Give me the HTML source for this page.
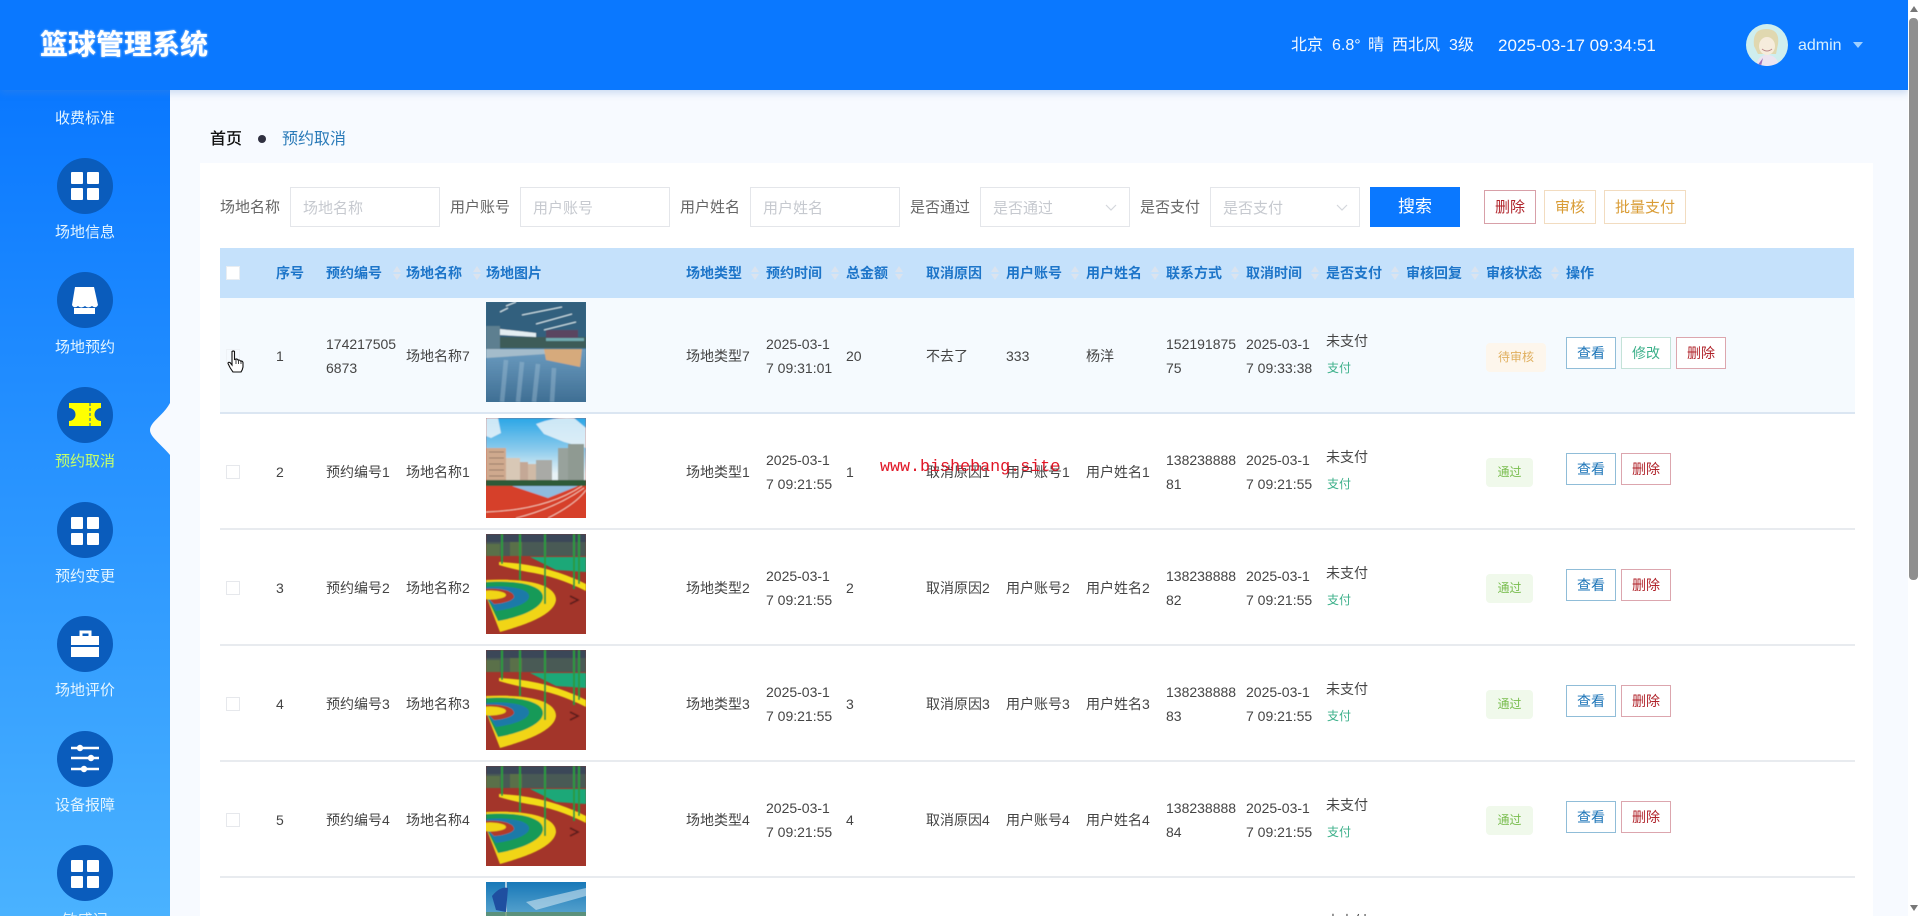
<!DOCTYPE html>
<html lang="zh"><head><meta charset="utf-8"><title>篮球管理系统</title>
<style>
*{box-sizing:border-box}
html,body{margin:0;padding:0;width:1920px;height:916px;overflow:hidden;background:#f7faff;font-family:"Liberation Sans","Noto Sans CJK SC",sans-serif}
#wrap{position:relative;width:1920px;height:916px;overflow:hidden;background:#f7faff}
.a{position:absolute;white-space:nowrap}
#hd{position:absolute;left:0;top:0;width:1908px;height:90px;background:#0a78ff;box-shadow:0 3px 7px rgba(90,140,210,.28);z-index:5}
#sb{position:absolute;left:0;top:90px;width:170px;height:826px;background:linear-gradient(180deg,#0a78ff,#4ab2ff)}
.lb{position:absolute;left:0;width:170px;text-align:center;color:#e4f5ff;font-size:15px;line-height:20px}
#panel{position:absolute;left:200px;top:163px;width:1673px;height:753px;background:#fff}
.fl{position:absolute;top:198px;font-size:15px;line-height:20px;color:#666}
.ip{position:absolute;top:187px;width:150px;height:40px;border:1px solid #e4e6ea;background:#fff;color:#c6c9cf;font-size:15px;line-height:41px;padding-left:12px}
.tb{position:absolute;top:190px;height:34px;background:#fff;font-size:15px;line-height:34px;text-align:center;border:1px solid #f2dcc0;color:#d99c35}
#th{position:absolute;left:220px;top:248px;width:1634px;height:51px;background:#c5e1fb}
.h{position:absolute;top:263px;font-size:14px;font-weight:700;line-height:20px;color:#1d75c9;white-space:nowrap}
.s{position:absolute;top:266px;width:8px;height:14px}
.s:before,.s:after{content:"";position:absolute;left:0;border-left:4px solid transparent;border-right:4px solid transparent}
.s:before{top:0;border-bottom:6px solid #dbe3ee}
.s:after{bottom:0;border-top:6px solid #dbe3ee}
.r{position:absolute;left:220px;width:1635px;height:116px;border-bottom:2px solid #e8ebef;background:#fff}
.r1{background:#f5fafe;border-bottom-color:#dbe6f2}
.t{position:absolute;top:46px;line-height:24px;font-size:14px;color:#444;white-space:nowrap}
.d{top:34px}
.ck{position:absolute;left:6px;top:51px;width:14px;height:14px;border:1px solid #e6e8ec;background:#fff}
.im{position:absolute;left:266px;top:4px;width:100px;height:100px;display:block}
.np{position:absolute;left:1106px;top:33px;font-size:14px;line-height:20px;color:#444}
.pay{position:absolute;left:1107px;top:61px;font-size:12px;line-height:18px;color:#3cb08a}
.tag{position:absolute;left:1266px;top:44px;height:29px;line-height:29px;font-size:12px;text-align:center;border-radius:4px}
.ok{width:47px;background:#f0f9eb;color:#79bd4e}
.wt{width:60px;top:45px;background:#fdf6ec;color:#e0b060}
.b{position:absolute;top:39px;width:50px;height:32px;line-height:30px;font-size:14px;text-align:center;background:#fff}
.v{left:1346px;border:1px solid #90bdd8;color:#1d75b8}
.m{left:1401px;border:1px solid #c4e2d8;color:#3cb08a}
.x{border:1px solid #dca6ae;color:#b0232a}
</style></head><body>
<div id="wrap">
<svg width="0" height="0" style="position:absolute"><defs>
<filter id="bl" x="-5%" y="-5%" width="110%" height="110%"><feGaussianBlur stdDeviation=".55"/></filter>
<linearGradient id="sky" x1="0" y1="0" x2="0" y2="1"><stop offset="0" stop-color="#2aa6e6"/><stop offset=".45" stop-color="#8ccbec"/><stop offset=".8" stop-color="#e8f2f6"/></linearGradient>
<linearGradient id="fl" x1="0" y1="0" x2="0" y2="1"><stop offset="0" stop-color="#6c9cc0"/><stop offset="1" stop-color="#3f6f94"/></linearGradient>
<linearGradient id="sk2" x1="0" y1="0" x2="0" y2="1"><stop offset="0" stop-color="#1878b8"/><stop offset="1" stop-color="#8cc6df"/></linearGradient>
<symbol id="gym" viewBox="0 0 100 100">
<rect width="100" height="100" fill="#3f7090"/>
<g filter="url(#bl)">
<rect width="100" height="38" fill="#32607e"/>
<path d="M20 4L30 0M36 13L76 5M50 22L86 12M58 28L90 20M14 10L22 6" stroke="#d6e8ee" stroke-width="1.1"/>
<rect x="0" y="24" width="14" height="24" fill="#5d7f90"/>
<path d="M14 27L50 31V35L14 33Z" fill="#e4eef2"/>
<rect x="14" y="35" width="86" height="11" fill="#3e5c58"/>
<rect x="60" y="28" width="32" height="8" fill="#5a4560"/>
<rect x="60" y="36" width="38" height="3" fill="#6faab0"/>
<rect y="47" width="100" height="53" fill="url(#fl)"/>
<path d="M0 47H60V52L0 56Z" fill="#a4bccb"/>
<path d="M58 47H96L94 65 60 58Z" fill="#d6aa7c"/>
<path d="M20 58L16 100M36 60L32 100M52 62L48 100M68 66L66 100" stroke="#a6c4d8" stroke-width="4.5" opacity=".4"/>
</g></symbol>
<symbol id="sch" viewBox="0 0 100 100">
<rect width="100" height="100" fill="#d6402a"/>
<g filter="url(#bl)">
<rect width="100" height="70" fill="url(#sky)"/>
<path d="M0 0H12L15 15 5 20 0 18ZM50 6Q70 -2 88 0L100 10V30L78 24 58 16Z" fill="#f4f8fa" opacity=".8"/>
<rect x="0" y="30" width="20" height="38" fill="#cfa98e"/>
<path d="M3 34H18M3 40H18M3 46H18M3 52H18M3 58H18" stroke="#9a7a68" stroke-width="1"/>
<rect x="20" y="40" width="14" height="27" fill="#d8c8b6"/>
<rect x="34" y="44" width="8" height="23" fill="#c4a896"/>
<rect x="42" y="46" width="8" height="21" fill="#d0baa6"/>
<rect x="50" y="42" width="16" height="24" fill="#a9aaa6"/>
<rect x="72" y="30" width="10" height="34" fill="#98a29c"/>
<rect x="82" y="26" width="16" height="38" fill="#8f9a92"/>
<rect x="0" y="62" width="100" height="7" fill="#2d5a38"/>
<rect y="68" width="100" height="32" fill="#d6402a"/>
<path d="M26 68L92 68 62 80Z" fill="#8fbbdd"/>
<path d="M0 94Q60 92 96 68M30 100Q70 90 98 70M62 100Q90 86 100 72" stroke="#f4c8b8" stroke-width=".9" fill="none"/>
</g></symbol>
<symbol id="rb" viewBox="0 0 100 100">
<rect width="100" height="100" fill="#a3352a"/>
<g filter="url(#bl)">
<rect width="100" height="22" fill="#4a5a54"/>
<path d="M0 0H100V8H0Z" fill="#3a4658"/>
<path d="M0 10H14V22H0ZM24 8H36V22H24Z" fill="#5a7048"/>
<path d="M44 23H100V38L70 36Z" fill="#1fa878"/>
<path d="M13 28Q60 30 100 50V57Q70 42 42 38 26 35 13 31Z" fill="#f2dc14"/>
<path d="M0 46C40 44 70 50 70 66C68 82 35 92 14 98L0 62Z" fill="#f1d512"/>
<path d="M0 48C35 46 58 52 57 64C55 76 30 84 12 87L0 62Z" fill="#159a58"/>
<path d="M0 53C25 51 44 55 43 63C42 70 25 75 10 77L0 62Z" fill="#1b7aa8"/>
<path d="M0 55C15 54 28 57 28 63C27 67 15 70 8 70L0 62Z" fill="#b03a2c"/>
<ellipse cx="4" cy="61" rx="16" ry="4.5" fill="#f1d512"/>
<path d="M59 0V70M88 0V55M93 0V50M34 0V46M16 0V30" stroke="#2a9a3c" stroke-width="2" fill="none"/>
<path d="M84 62L92 66 84 70" stroke="#5a1f1a" stroke-width="1.5" fill="none"/>
</g></symbol>
<symbol id="ct" viewBox="0 0 100 100">
<rect width="100" height="60" fill="url(#sk2)"/>
<path d="M40 20L100 6V14L50 28Z" fill="#cfe4f0" opacity=".6"/>
<path d="M20 0V34" stroke="#e8eef2" stroke-width="1.4"/>
<path d="M6 14Q14 4 22 6L20 30 10 28Z" fill="#1f4fa0"/>
<rect y="30" width="100" height="30" fill="#5e8a5a" opacity=".7"/>
</symbol>
</defs></svg>

<div id="sb"></div>
<svg class="a" style="left:0;top:90px" width="170" height="826" viewBox="0 90 170 826">
<path d="M170 403C165 412 158 417 153 423C149 428 149 432 153 437C158 443 165 449 170 455Z" fill="#f7faff"/>
<g fill="#0a5cbc"><circle cx="85" cy="186" r="28"/><circle cx="85" cy="300" r="28"/><circle cx="85" cy="415" r="28"/><circle cx="85" cy="530" r="28"/><circle cx="85" cy="644" r="28"/><circle cx="85" cy="759" r="28"/><circle cx="85" cy="873" r="28"/></g>
<g fill="#fff">
<rect x="71" y="172" width="12" height="12" rx="1"/><rect x="87" y="172" width="12" height="12" rx="1"/><rect x="71" y="188" width="12" height="12" rx="1"/><rect x="87" y="188" width="12" height="12" rx="1"/>
<path d="M75 287H94L98 305Q96 309 92 306Q88 309 85 306Q81 309 78 306Q74 309 72 305Z"/><path d="M74 308H95V314H74Z"/>
<rect x="71" y="517" width="12" height="12" rx="1"/><rect x="87" y="517" width="12" height="12" rx="1"/><rect x="71" y="533" width="12" height="12" rx="1"/><rect x="87" y="533" width="12" height="12" rx="1"/>
<rect x="71" y="860" width="12" height="12" rx="1"/><rect x="87" y="860" width="12" height="12" rx="1"/><rect x="71" y="876" width="12" height="12" rx="1"/><rect x="87" y="876" width="12" height="12" rx="1"/>
<path d="M71 636H99V645H71ZM71 647H99V657H71Z"/>
<path d="M71 748H99M71 758H99M71 769H99" stroke="#fff" stroke-width="2.4"/>
<circle cx="80" cy="748" r="3.2"/><circle cx="91" cy="758" r="3.2"/><circle cx="84" cy="769" r="3.2"/>
</g>
<path d="M81 636V632H90V636" fill="none" stroke="#fff" stroke-width="3"/>
<path d="M69 403H101V408A6.5 6.5 0 0 0 101 421V426H69V421A6.5 6.5 0 0 0 69 408Z" fill="#ffff00"/>
<path d="M90 403V426" stroke="#0a5cbc" stroke-width="1" stroke-dasharray="3 2"/>
</svg>
<div class="lb" style="top:109px">收费标准</div>
<div class="lb" style="top:223px">场地信息</div>
<div class="lb" style="top:338px">场地预约</div>
<div class="lb" style="top:452px;color:#c4ff6a">预约取消</div>
<div class="lb" style="top:567px">预约变更</div>
<div class="lb" style="top:681px">场地评价</div>
<div class="lb" style="top:796px">设备报障</div>
<div class="lb" style="top:911px;height:5px;overflow:hidden">敏感词</div>

<div id="hd"></div>
<div class="a" style="left:40px;top:25px;font-size:28px;line-height:40px;font-weight:700;color:#fff;z-index:6;text-shadow:0 0 2px #e8f2ff">篮球管理系统</div>
<div class="a" style="left:1291px;top:35px;font-size:16px;line-height:22px;color:#f4f9ff;z-index:6">北京</div>
<div class="a" style="left:1332px;top:35px;font-size:16px;line-height:22px;color:#f4f9ff;z-index:6">6.8°</div>
<div class="a" style="left:1368px;top:35px;font-size:16px;line-height:22px;color:#f4f9ff;z-index:6">晴</div>
<div class="a" style="left:1392px;top:35px;font-size:16px;line-height:22px;color:#f4f9ff;z-index:6">西北风</div>
<div class="a" style="left:1449px;top:35px;font-size:16px;line-height:22px;color:#f4f9ff;z-index:6">3级</div>
<div class="a" style="left:1498px;top:35px;font-size:17px;line-height:22px;color:#f4f9ff;z-index:6">2025-03-17 09:34:51</div>
<svg class="a" style="left:1746px;top:24px;z-index:6" width="42" height="42" viewBox="0 0 42 42">
<defs><clipPath id="av"><circle cx="21" cy="21" r="21"/></clipPath></defs>
<g clip-path="url(#av)"><rect width="42" height="42" fill="#cfeeee"/>
<path d="M8 22Q6 5 20 5Q34 5 32 20L30 30H12Z" fill="#e0d8b0"/>
<ellipse cx="21" cy="22" rx="8" ry="9" fill="#f6ecdc"/>
<path d="M16 25Q21 29 26 25" stroke="#b88" stroke-width="1" fill="none"/>
<path d="M10 42Q12 31 21 31Q31 31 33 42Z" fill="#ece4f0"/>
<path d="M11 42L17 34 15 42Z" fill="#a070b8"/></g></svg>
<div class="a" style="left:1798px;top:35px;font-size:16px;line-height:22px;color:#d8f0ff;z-index:6">admin</div>
<div class="a" style="left:1853px;top:42px;border-left:5.5px solid transparent;border-right:5.5px solid transparent;border-top:6px solid #9fd0ff;z-index:6"></div>

<div class="a" style="left:210px;top:129px;font-size:16px;line-height:22px;color:#111;font-weight:500">首页</div>
<div class="a" style="left:258px;top:135px;width:8px;height:8px;border-radius:50%;background:#303040"></div>
<div class="a" style="left:282px;top:129px;font-size:16px;line-height:22px;color:#2a7ab8">预约取消</div>

<div id="panel"></div>
<div class="fl" style="left:220px">场地名称</div><div class="ip" style="left:290px">场地名称</div>
<div class="fl" style="left:450px">用户账号</div><div class="ip" style="left:520px">用户账号</div>
<div class="fl" style="left:680px">用户姓名</div><div class="ip" style="left:750px">用户姓名</div>
<div class="fl" style="left:910px">是否通过</div><div class="ip" style="left:980px">是否通过</div>
<div class="fl" style="left:1140px">是否支付</div><div class="ip" style="left:1210px">是否支付</div>
<svg class="a" style="left:1105px;top:204px" width="12" height="8"><path d="M1 1L6 6 11 1" fill="none" stroke="#d4d7dc" stroke-width="1.2"/></svg>
<svg class="a" style="left:1336px;top:204px" width="12" height="8"><path d="M1 1L6 6 11 1" fill="none" stroke="#d4d7dc" stroke-width="1.2"/></svg>
<div class="a" style="left:1370px;top:187px;width:90px;height:40px;background:#0a78ff;color:#fff;font-size:17px;line-height:40px;text-align:center">搜索</div>
<div class="tb" style="left:1484px;width:52px;border-color:#d8a0a8;color:#b0232a">删除</div>
<div class="tb" style="left:1544px;width:52px">审核</div>
<div class="tb" style="left:1604px;width:82px">批量支付</div>

<div id="th"></div>
<div class="a" style="left:226px;top:266px;width:14px;height:14px;background:#fff;border:1px solid #e8edf2"></div>
<div class="h" style="left:276px">序号</div><div class="h" style="left:326px">预约编号</div><div class="s" style="left:393px"></div>
<div class="h" style="left:406px">场地名称</div><div class="s" style="left:473px"></div>
<div class="h" style="left:486px">场地图片</div>
<div class="h" style="left:686px">场地类型</div><div class="s" style="left:751px"></div>
<div class="h" style="left:766px">预约时间</div><div class="s" style="left:831px"></div>
<div class="h" style="left:846px">总金额</div><div class="s" style="left:895px"></div>
<div class="h" style="left:926px">取消原因</div><div class="s" style="left:991px"></div>
<div class="h" style="left:1006px">用户账号</div><div class="s" style="left:1071px"></div>
<div class="h" style="left:1086px">用户姓名</div><div class="s" style="left:1151px"></div>
<div class="h" style="left:1166px">联系方式</div><div class="s" style="left:1231px"></div>
<div class="h" style="left:1246px">取消时间</div><div class="s" style="left:1311px"></div>
<div class="h" style="left:1326px">是否支付</div><div class="s" style="left:1391px"></div>
<div class="h" style="left:1406px">审核回复</div><div class="s" style="left:1471px"></div>
<div class="h" style="left:1486px">审核状态</div><div class="s" style="left:1551px"></div>
<div class="h" style="left:1566px">操作</div>

<div class="r r1" style="top:298px">
<div class="ck" style="background:#f5fafe;border-color:#eef2f6"></div><div class="t" style="left:56px">1</div><div class="t d" style="left:106px">174217505<br>6873</div><div class="t" style="left:186px">场地名称7</div>
<svg class="im"><use href="#gym" width="100" height="100"/></svg>
<div class="t" style="left:466px">场地类型7</div><div class="t d" style="left:546px">2025-03-1<br>7 09:31:01</div><div class="t" style="left:626px">20</div><div class="t" style="left:706px">不去了</div><div class="t" style="left:786px">333</div><div class="t" style="left:866px">杨洋</div><div class="t d" style="left:946px">152191875<br>75</div><div class="t d" style="left:1026px">2025-03-1<br>7 09:33:38</div>
<div class="np">未支付</div><div class="pay">支付</div><div class="tag wt">待审核</div>
<div class="b v">查看</div><div class="b m">修改</div><div class="b x" style="left:1456px">删除</div>
</div>

<div class="r" style="top:414px">
<div class="ck"></div><div class="t" style="left:56px">2</div><div class="t" style="left:106px">预约编号1</div><div class="t" style="left:186px">场地名称1</div>
<svg class="im"><use href="#sch" width="100" height="100"/></svg>
<div class="t" style="left:466px">场地类型1</div><div class="t d" style="left:546px">2025-03-1<br>7 09:21:55</div><div class="t" style="left:626px">1</div><div class="t" style="left:706px">取消原因1</div><div class="t" style="left:786px">用户账号1</div><div class="t" style="left:866px">用户姓名1</div><div class="t d" style="left:946px">138238888<br>81</div><div class="t d" style="left:1026px">2025-03-1<br>7 09:21:55</div>
<div class="np">未支付</div><div class="pay">支付</div><div class="tag ok">通过</div>
<div class="b v">查看</div><div class="b x" style="left:1401px">删除</div>
</div>

<div class="r" style="top:530px">
<div class="ck"></div><div class="t" style="left:56px">3</div><div class="t" style="left:106px">预约编号2</div><div class="t" style="left:186px">场地名称2</div>
<svg class="im"><use href="#rb" width="100" height="100"/></svg>
<div class="t" style="left:466px">场地类型2</div><div class="t d" style="left:546px">2025-03-1<br>7 09:21:55</div><div class="t" style="left:626px">2</div><div class="t" style="left:706px">取消原因2</div><div class="t" style="left:786px">用户账号2</div><div class="t" style="left:866px">用户姓名2</div><div class="t d" style="left:946px">138238888<br>82</div><div class="t d" style="left:1026px">2025-03-1<br>7 09:21:55</div>
<div class="np">未支付</div><div class="pay">支付</div><div class="tag ok">通过</div>
<div class="b v">查看</div><div class="b x" style="left:1401px">删除</div>
</div>

<div class="r" style="top:646px">
<div class="ck"></div><div class="t" style="left:56px">4</div><div class="t" style="left:106px">预约编号3</div><div class="t" style="left:186px">场地名称3</div>
<svg class="im"><use href="#rb" width="100" height="100"/></svg>
<div class="t" style="left:466px">场地类型3</div><div class="t d" style="left:546px">2025-03-1<br>7 09:21:55</div><div class="t" style="left:626px">3</div><div class="t" style="left:706px">取消原因3</div><div class="t" style="left:786px">用户账号3</div><div class="t" style="left:866px">用户姓名3</div><div class="t d" style="left:946px">138238888<br>83</div><div class="t d" style="left:1026px">2025-03-1<br>7 09:21:55</div>
<div class="np">未支付</div><div class="pay">支付</div><div class="tag ok">通过</div>
<div class="b v">查看</div><div class="b x" style="left:1401px">删除</div>
</div>

<div class="r" style="top:762px">
<div class="ck"></div><div class="t" style="left:56px">5</div><div class="t" style="left:106px">预约编号4</div><div class="t" style="left:186px">场地名称4</div>
<svg class="im"><use href="#rb" width="100" height="100"/></svg>
<div class="t" style="left:466px">场地类型4</div><div class="t d" style="left:546px">2025-03-1<br>7 09:21:55</div><div class="t" style="left:626px">4</div><div class="t" style="left:706px">取消原因4</div><div class="t" style="left:786px">用户账号4</div><div class="t" style="left:866px">用户姓名4</div><div class="t d" style="left:946px">138238888<br>84</div><div class="t d" style="left:1026px">2025-03-1<br>7 09:21:55</div>
<div class="np">未支付</div><div class="pay">支付</div><div class="tag ok">通过</div>
<div class="b v">查看</div><div class="b x" style="left:1401px">删除</div>
</div>

<div class="r" style="top:878px;height:38px;border-bottom:0;overflow:hidden">
<svg class="im" style="height:34px"><use href="#ct" width="100" height="100"/></svg>
<div class="np" style="height:5px;overflow:hidden">未支付</div>
</div>

<div class="a" style="left:880px;top:458px;font-family:'Liberation Mono',monospace;font-size:16.7px;line-height:20px;color:#e01525;z-index:4">www.bishebang.site</div>

<svg class="a" style="left:227px;top:350px;z-index:7" width="18" height="23" viewBox="0 0 18 23"><path d="M5 1.5Q6.5 .5 7.5 1.5V9.5L9 9Q10.5 8.8 11 10 12.5 9.5 13.5 11 15.5 10.8 16 12.5V17Q15.5 20 14 22H6Q4.5 20 3 17.5L1 13.5Q1 11.8 3 12.5L5 15Z" fill="#fff" stroke="#111" stroke-width="1.1"/><path d="M9 9.5V14M11.5 10.5V14M14 11.5V14" stroke="#111" stroke-width=".8"/></svg>

<div class="a" style="left:1908px;top:0;width:12px;height:916px;background:#fff;z-index:6"></div>
<div class="a" style="left:1909px;top:18px;width:9px;height:562px;background:#8f8f8f;border-radius:4px;z-index:7"></div>
<div class="a" style="left:1910px;top:6px;border-left:4px solid transparent;border-right:4px solid transparent;border-bottom:6px solid #777;z-index:7"></div>
<div class="a" style="left:1910px;top:905px;border-left:4px solid transparent;border-right:4px solid transparent;border-top:6px solid #777;z-index:7"></div>
</div>
</body></html>
